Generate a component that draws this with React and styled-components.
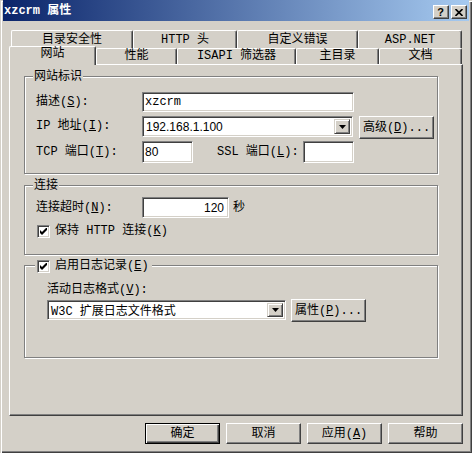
import React from "react";
import styled, { createGlobalStyle } from "styled-components";

const MONO = `"Liberation Mono", "Noto Sans CJK SC", monospace`;
const SANS = `"Liberation Sans", "Noto Sans CJK SC", sans-serif`;

const Global = createGlobalStyle`
  html, body { margin: 0; padding: 0; background: #D4D0C8; }
  body { font-family: ${MONO}; font-size: 12px; color: #000; }
  * { box-sizing: border-box; }
`;

const Window = styled.div`
  position: relative;
  width: 472px;
  height: 453px;
  background: #d4d0c8;
  box-shadow: inset 1px 1px 0 #d4d0c8, inset 2px 2px 0 #fff,
    inset -1px -1px 0 #404040, inset -2px -2px 0 #808080;
  display: flex;
  flex-direction: column;
  overflow: hidden;
`;

const TitleBar = styled.div`
  margin: 0 3px;
  height: 21px;
  background: linear-gradient(to right, #0a246a, #a6caf0);
  display: flex;
  align-items: flex-start;
  justify-content: space-between;
  padding: 0 2px 0 1px;
`;

const Title = styled.div`
  color: #fff;
  font-weight: bold;
  font-size: 12px;
  line-height: 14px;
  margin-top: 4px;
  white-space: pre;
`;

const CaptionButtons = styled.div`
  display: flex;
  gap: 2px;
  margin-top: 5px;
`;

const CaptionButton = styled.div`
  width: 16px;
  height: 14px;
  background: #d4d0c8;
  border: 1px solid;
  border-color: #fff #404040 #404040 #fff;
  box-shadow: inset -1px -1px 0 #808080;
  display: flex;
  align-items: center;
  justify-content: center;
  font-family: ${SANS};
  font-weight: bold;
  font-size: 11px;
  line-height: 11px;
  padding-right: 1px;
`;

const TabStrip = styled.div`
  margin: 9px 0 0 9px;
  display: flex;
  flex-direction: column;
`;

const TabRow = styled.div`
  display: flex;
  height: 18px;
  padding-left: ${(p) => (p.$front ? 0 : 2)}px;
  margin-top: ${(p) => (p.$front ? -2 : 0)}px;
  position: relative;
  z-index: ${(p) => (p.$front ? 2 : 1)};
  align-items: flex-start;
`;

const Tab = styled.div`
  flex: none;
  width: ${(p) => p.$w}px;
  height: ${(p) => (p.$sel ? 19 : p.$front ? 16 : 18)}px;
  margin-top: ${(p) => (p.$front && !p.$sel ? 2 : 0)}px;
  background: #d4d0c8;
  border-top: 1px solid #fff;
  border-left: 1px solid #fff;
  border-right: 1px solid #404040;
  box-shadow: inset -1px 0 0 #808080;
  border-radius: 2px 2px 0 0;
  text-align: center;
  line-height: 14px;
  padding-top: ${(p) => (p.$front ? 0 : 2)}px;
  white-space: pre;
  position: relative;
  z-index: ${(p) => (p.$sel ? 3 : 1)};
`;

const Panel = styled.div`
  margin-left: 9px;
  width: 454px;
  height: 352px;
  border-top: 1px solid #fff;
  border-left: 1px solid #fff;
  border-right: 1px solid #404040;
  border-bottom: 1px solid #404040;
  box-shadow: inset -1px -1px 0 #808080;
  padding: 11px 0 0 14px;
  display: flex;
  flex-direction: column;
  position: relative;
  z-index: 1;
`;

const Group = styled.div`
  position: relative;
  width: 414px;
  height: ${(p) => p.$h}px;
  margin-top: ${(p) => p.$mt || 0}px;
  border: 1px solid #808080;
  box-shadow: inset 1px 1px 0 #fff, 1px 1px 0 #fff;
  padding: ${(p) => p.$pad};
  display: flex;
  flex-direction: column;
`;

const Legend = styled.div`
  position: absolute;
  top: -7px;
  left: ${(p) => p.$left}px;
  padding: 0 ${(p) => p.$pr || 1}px 0 ${(p) => p.$pl || 1}px;
  background: #d4d0c8;
  line-height: 14px;
  display: flex;
  align-items: center;
  white-space: pre;
`;

const Row = styled.div`
  display: flex;
  align-items: ${(p) => p.$align || "center"};
  height: ${(p) => p.$h}px;
  margin-top: ${(p) => p.$mt || 0}px;
`;

const Label = styled.div`
  flex: none;
  width: ${(p) => (p.$w ? `${p.$w}px` : "auto")};
  margin-left: ${(p) => p.$ml || 0}px;
  margin-top: ${(p) => p.$mt || 0}px;
  line-height: 14px;
  white-space: pre;
`;

const U = styled.u`
  text-decoration: underline;
  text-underline-offset: 1px;
`;

const Sunken = styled.div`
  flex: none;
  width: ${(p) => p.$w}px;
  height: ${(p) => p.$h}px;
  margin-top: ${(p) => p.$mt || 0}px;
  background: #fff;
  border: 1px solid;
  border-color: #808080 #fff #fff #808080;
  box-shadow: inset 1px 1px 0 #404040, inset -1px -1px 0 #d4d0c8;
  padding: 0 ${(p) => (p.$right ? 4 : 2)}px 0 2px;
  display: flex;
  align-items: center;
  justify-content: ${(p) => (p.$right ? "flex-end" : "space-between")};
  font-family: ${(p) => (p.$sans ? SANS : MONO)};
  font-size: 12px;
  white-space: pre;
`;

const ComboBox = styled(Sunken)`
  padding: 2px;
  align-items: stretch;
`;

const ComboText = styled.div`
  flex: 1;
  display: flex;
  align-items: center;
  padding-left: 1px;
  font-family: ${(p) => (p.$sans ? SANS : MONO)};
  white-space: pre;
`;

const DropButton = styled.div`
  flex: none;
  width: 16px;
  background: #d4d0c8;
  border: 1px solid;
  border-color: #d4d0c8 #404040 #404040 #d4d0c8;
  box-shadow: inset 1px 1px 0 #fff, inset -1px -1px 0 #808080;
  display: flex;
  align-items: center;
  justify-content: center;
`;

const Button = styled.div`
  flex: none;
  width: 75px;
  height: ${(p) => p.$h || 23}px;
  margin-left: ${(p) => p.$ml || 0}px;
  margin-top: ${(p) => p.$mt || 0}px;
  background: #d4d0c8;
  border: 1px solid;
  border-color: ${(p) => (p.$def ? "#000" : "#fff #404040 #404040 #fff")};
  box-shadow: ${(p) =>
    p.$def
      ? "inset 1px 1px 0 #fff, inset -1px -1px 0 #404040, inset -2px -2px 0 #808080"
      : "inset -1px -1px 0 #808080"};
  display: flex;
  align-items: center;
  justify-content: center;
  line-height: 14px;
  white-space: pre;
`;

const ButtonText = styled.span`
  white-space: pre;
`;

const CheckBox = styled.div`
  flex: none;
  width: 13px;
  height: 13px;
  background: #fff;
  border: 1px solid;
  border-color: #808080 #fff #fff #808080;
  box-shadow: inset 1px 1px 0 #404040, inset -1px -1px 0 #d4d0c8;
  display: flex;
  align-items: center;
  justify-content: center;
`;

const CheckRow = styled.div`
  display: flex;
  align-items: center;
  gap: 5px;
  margin-top: ${(p) => p.$mt || 0}px;
  margin-left: ${(p) => p.$ml || 0}px;
  line-height: 14px;
`;

const CheckText = styled.span`
  white-space: pre;
`;

const ComboWrap = styled.div`
  margin-top: 1px;
`;

const ButtonBar = styled.div`
  margin-top: 7px;
  display: flex;
  justify-content: flex-end;
  gap: 6px;
  padding-right: 9px;
`;

const Arrow = () => (
  <svg width="7" height="4" viewBox="0 0 7 4">
    <path d="M0 0 H7 L3.5 4 Z" fill="#000" />
  </svg>
);

const Check = () => (
  <svg width="7" height="7" viewBox="0 0 7 7">
    <path d="M0 2 L0 5 L2 7 L7 2 L7 -1 L2 4 Z" fill="#000" />
  </svg>
);

const CloseGlyph = () => (
  <svg width="8" height="7" viewBox="0 0 8 7">
    <path d="M0.5 0 L7.5 7 M7.5 0 L0.5 7" stroke="#000" strokeWidth="1.6" />
  </svg>
);

const Combo = ({ w, h, text, sans }) => (
  <ComboBox $w={w} $h={h}>
    <ComboText $sans={sans}>{text}</ComboText>
    <DropButton>
      <Arrow />
    </DropButton>
  </ComboBox>
);

const Checked = ({ children, mt, ml }) => (
  <CheckRow $mt={mt} $ml={ml}>
    <CheckBox>
      <Check />
    </CheckBox>
    <CheckText>{children}</CheckText>
  </CheckRow>
);

export default function App() {
  return (
    <>
      <Global />
      <Window>
        <TitleBar>
          <Title>xzcrm 属性</Title>
          <CaptionButtons>
            <CaptionButton>?</CaptionButton>
            <CaptionButton>
              <CloseGlyph />
            </CaptionButton>
          </CaptionButtons>
        </TitleBar>

        <TabStrip>
          <TabRow>
            <Tab $w={122}>目录安全性</Tab>
            <Tab $w={104}>HTTP 头</Tab>
            <Tab $w={121}>自定义错误</Tab>
            <Tab $w={104}>ASP.NET</Tab>
          </TabRow>
          <TabRow $front>
            <Tab $front $sel $w={87}>网站</Tab>
            <Tab $front $w={81}>性能</Tab>
            <Tab $front $w={119}>ISAPI 筛选器</Tab>
            <Tab $front $w={83}>主目录</Tab>
            <Tab $front $w={83}>文档</Tab>
          </TabRow>
        </TabStrip>

        <Panel>
          <Group $h={98} $pad="15px 0 0 11px">
            <Legend $left={8}>网站标识</Legend>
            <Row $h={20}>
              <Label $w={106}>
                描述(<U>S</U>):
              </Label>
              <Sunken $w={212} $h={20}>xzcrm</Sunken>
            </Row>
            <Row $h={23} $mt={4} $align="flex-start">
              <Label $w={106} $mt={3}>
                IP 地址(<U>I</U>):
              </Label>
              <Combo w={211} h={21} text="192.168.1.100" sans />
              <Button $ml={6}>
                <ButtonText>
                  高级(<U>D</U>)...
                </ButtonText>
              </Button>
            </Row>
            <Row $h={22} $mt={2}>
              <Label $w={106}>
                TCP 端口(<U>T</U>):
              </Label>
              <Sunken $w={51} $h={22} $sans>80</Sunken>
              <Label $w={86} $ml={24}>
                SSL 端口(<U>L</U>):
              </Label>
              <Sunken $w={51} $h={22} />
            </Row>
          </Group>

          <Group $h={70} $mt={11} $pad="11px 0 0 11px">
            <Legend $left={8}>连接</Legend>
            <Row $h={21}>
              <Label $w={106}>
                连接超时(<U>N</U>):
              </Label>
              <Sunken $w={87} $h={21} $sans $right>120</Sunken>
              <Label $ml={4}>秒</Label>
            </Row>
            <Checked mt={6} ml={1}>
              保持 HTTP 连接(<U>K</U>)
            </Checked>
          </Group>

          <Group $h={93} $mt={10} $pad="17px 0 0 22px">
            <Legend $left={10} $pl={2} $pr={3}>
              <Checked>
                启用日志记录(<U>E</U>)
              </Checked>
            </Legend>
            <Label>
              活动日志格式(<U>V</U>):
            </Label>
            <Row $h={23} $mt={2} $align="flex-start">
              <ComboWrap>
                <Combo w={239} h={20} text="W3C 扩展日志文件格式" />
              </ComboWrap>
              <Button $ml={5}>
                <ButtonText>
                  属性(<U>P</U>)...
                </ButtonText>
              </Button>
            </Row>
          </Group>
        </Panel>

        <ButtonBar>
          <Button $def $h={21}>确定</Button>
          <Button $h={21}>取消</Button>
          <Button $h={21}>
            <ButtonText>
              应用(<U>A</U>)
            </ButtonText>
          </Button>
          <Button $h={21}>帮助</Button>
        </ButtonBar>
      </Window>
    </>
  );
}
